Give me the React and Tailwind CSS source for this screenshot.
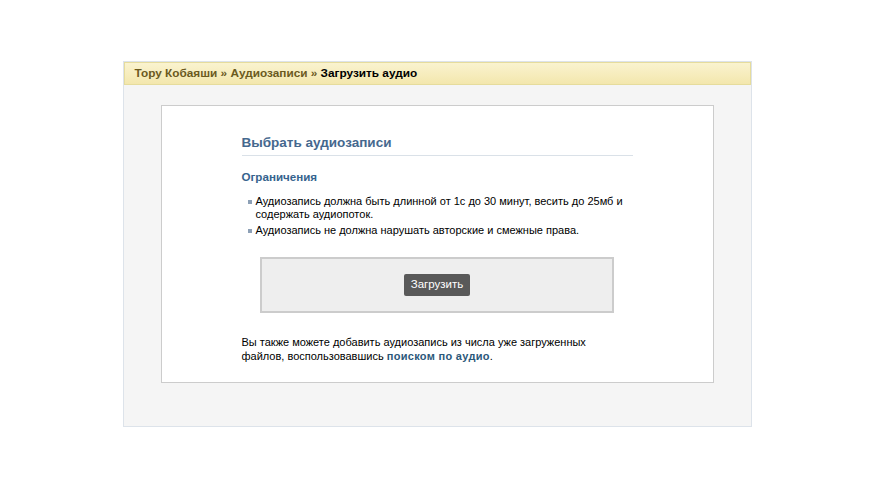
import React from 'react';

const limits = [
  'Аудиозапись должна быть длинной от 1с до 30 минут, весить до 25мб и содержать аудиопоток.',
  'Аудиозапись не должна нарушать авторские и смежные права.',
];

const App = () => {
  return (
    <div className="min-h-[488px] bg-white pt-[61px] text-[11px] text-black" style={{ fontFamily: '"Liberation Sans", Arial, sans-serif' }}>
      <div className="mx-auto w-[629px] border border-[#dde3ea] bg-[#f5f5f5] pb-[43px]">
        <div className="border border-[#e6dc9c] bg-gradient-to-b from-[#faf3cf] to-[#f3e7ad] px-[10px] py-[4px] text-[11.8px] font-bold leading-[13px]">
          <span className="text-[#6b5a1e]">Тору Кобаяши</span>
          <span className="text-[#6b5a1e]"> » </span>
          <span className="text-[#6b5a1e]">Аудиозаписи</span>
          <span className="text-[#6b5a1e]"> » </span>
          <span>Загрузить аудио</span>
        </div>

        <div className="mx-[37px] mt-[20px] border border-[#cccccc] bg-white pt-[29px] pb-[19px]">
          <div className="mx-auto w-[391px]">
            <h2 className="border-b border-[#dae1e8] pb-[4px] text-[13.5px] font-bold leading-[16px] text-[#45688e]">
              Выбрать аудиозаписи
            </h2>

            <h3 className="mt-[14px] text-[11.6px] font-bold leading-[13px] text-[#36638e]">Ограничения</h3>

            <ul className="mt-[12px] space-y-[3px] pl-[6px]">
              {limits.map((item) => (
                <li key={item} className="flex gap-[4px] leading-[13px]">
                  <span className="mt-[5px] h-[4px] w-[4px] shrink-0 bg-[#8da0b6]" />
                  <span>{item}</span>
                </li>
              ))}
            </ul>

            <div className="mx-auto mt-[20px] flex h-[56px] w-[354px] items-center justify-center border-2 border-[#cccccc] bg-[#eeeeee]">
              <button className="h-[22px] rounded-[2px] bg-[#595959] px-[7px] text-[11.5px] text-white">
                Загрузить
              </button>
            </div>

            <p className="mt-[22px] max-w-[360px] leading-[14px]">
              Вы также можете добавить аудиозапись из числа уже загруженных файлов, воспользовавшись{' '}
              <a href="#" className="font-bold tracking-[0.3px] text-[#2b587a]">поиском по аудио</a>.
            </p>
          </div>
        </div>
      </div>
    </div>
  );
};

export default App;
